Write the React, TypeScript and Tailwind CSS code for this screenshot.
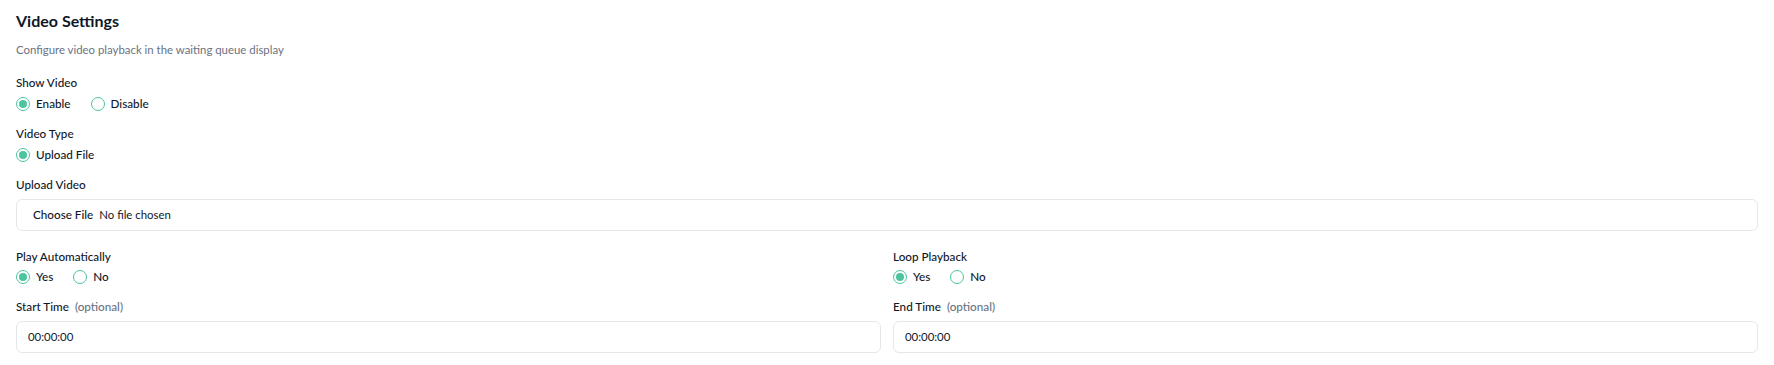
import React from "react";

const font = { fontFamily: '"Segoe UI", Lato, "Noto Sans", sans-serif' };

function Radio({ label, checked }: { label: string; checked?: boolean }) {
  return (
    <label className="flex items-center gap-[6px] text-[11.7px] font-medium text-gray-900">
      <span className="w-[14px] h-[14px] rounded-full border-[1.5px] border-[#4cc4a0] flex items-center justify-center bg-white">
        {checked && <span className="w-[8px] h-[8px] rounded-full bg-[#4cc4a0]" />}
      </span>
      {label}
    </label>
  );
}

function Label({ children, optional }: { children: React.ReactNode; optional?: boolean }) {
  return (
    <p className="text-[11.7px] font-medium text-gray-900 leading-4">
      {children}
      {optional && <span className="ml-[6px] text-gray-500">(optional)</span>}
    </p>
  );
}

function TextBox({ children }: { children: React.ReactNode }) {
  return (
    <div className="mt-[7px] h-[32px] rounded-md border border-gray-200 bg-white flex items-center px-[11px] text-[11.4px] text-gray-900">
      {children}
    </div>
  );
}

export default function App() {
  return (
    <div className="bg-white min-h-screen px-4 pt-[9px]" style={font}>
      <h2 className="text-base font-bold text-gray-900 leading-6">Video Settings</h2>
      <p className="mt-[9px] text-[11.4px] text-gray-500 leading-4">
        Configure video playback in the waiting queue display
      </p>

      {/* Show video */}
      <div className="mt-4">
        <Label>Show Video</Label>
        <div className="mt-[6px] flex items-center gap-5 h-4">
          <Radio label="Enable" checked />
          <Radio label="Disable" />
        </div>
      </div>

      {/* Video type */}
      <div className="mt-[13px]">
        <Label>Video Type</Label>
        <div className="mt-[6px] flex items-center gap-5 h-4">
          <Radio label="Upload File" checked />
        </div>
      </div>

      {/* Upload */}
      <div className="mt-[13px]">
        <Label>Upload Video</Label>
        <TextBox>
          <span className="ml-[5px] font-medium text-[11.7px]">Choose File</span>
          <span className="ml-[6px]">No file chosen</span>
        </TextBox>
      </div>

      <div className="mt-[17px] grid grid-cols-2 gap-3">
        <div>
          <Label>Play Automatically</Label>
          <div className="mt-[5px] flex items-center gap-5 h-4">
            <Radio label="Yes" checked />
            <Radio label="No" />
          </div>
          <div className="mt-[13px]">
            <Label optional>Start Time</Label>
            <TextBox>00:00:00</TextBox>
          </div>
        </div>
        <div>
          <Label>Loop Playback</Label>
          <div className="mt-[5px] flex items-center gap-5 h-4">
            <Radio label="Yes" checked />
            <Radio label="No" />
          </div>
          <div className="mt-[13px]">
            <Label optional>End Time</Label>
            <TextBox>00:00:00</TextBox>
          </div>
        </div>
      </div>
    </div>
  );
}
